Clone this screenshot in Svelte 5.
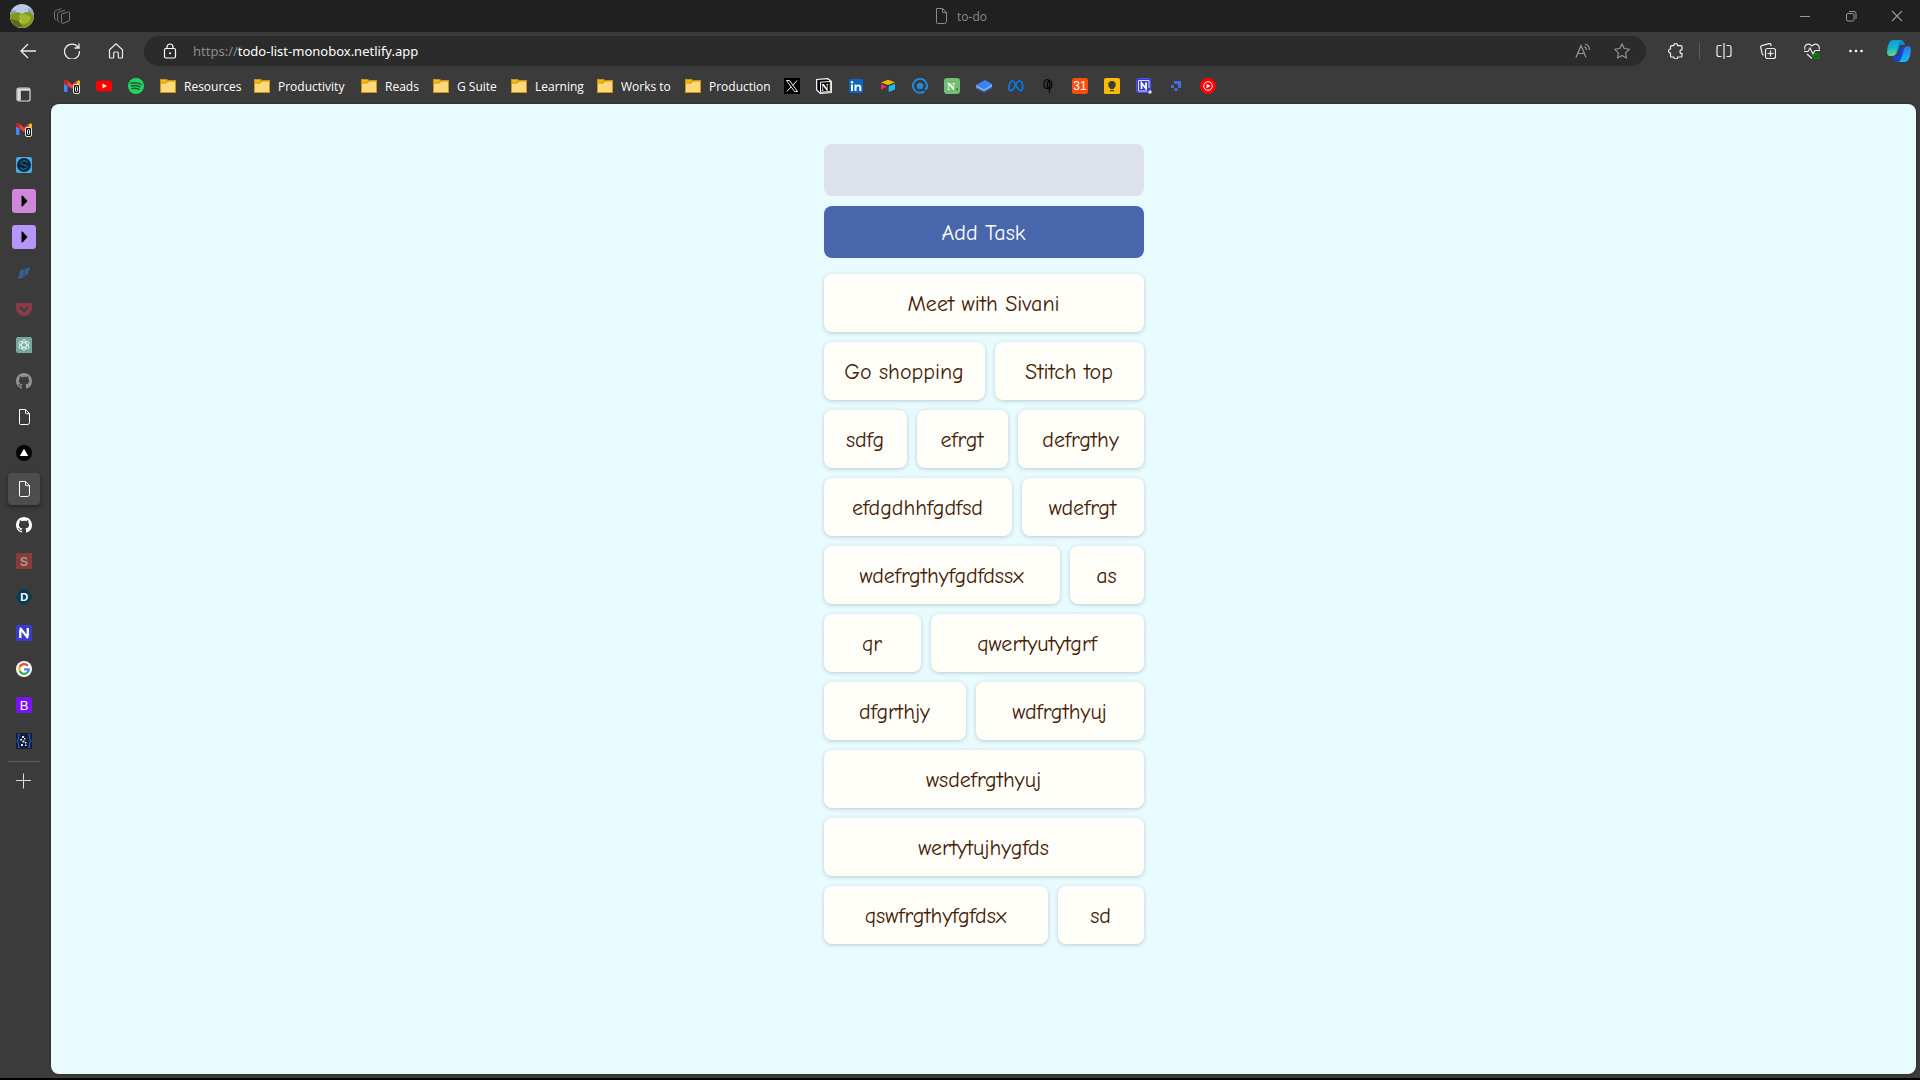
<script>
  const file = '<path d="M3.5.5h6l4 4v9q0 2-2 2h-7q-1 0-1-1zM9.500.5v3.500q0 .7.700.7h3.300" fill="none" stroke="currentColor"/>';
  const gmail = '<path fill="#4285f4" d="M0 3.500h3.500V14H1q-1 0-1-1z"/><path fill="#34a853" d="M12.500 6H16v7q0 1-1 1h-2.500z"/><path fill="#fbbc04" d="M12.500 4 14 2.500Q16 1.500 16 4v2l-3.500 2.500z"/><path fill="#ea4335" d="M0 5V3.500Q.5 1 3 2.500l5 4 5-4v5L8 11 3.500 7.600z"/><path fill="#c5221f" d="M0 4q0-2 2-2l1.500 1v5L0 5.500z"/><rect x="9.500" y="6.500" width="6" height="9" rx="1.500" fill="#111" stroke="#e8e8e8"/><rect x="11.500" y="8.500" width="2" height="5" rx="1" fill="none" stroke="#fff"/>';
  const github = '<path fill="currentColor" fill-rule="evenodd" d="M8 0C3.580 0 0 3.580 0 8c0 3.540 2.290 6.530 5.470 7.590.4.070.550-.170.550-.380 0-.190-.010-.820-.010-1.490-2.010.370-2.530-.490-2.690-.940-.090-.230-.480-.940-.820-1.130-.280-.150-.680-.520-.010-.530.630-.010 1.080.580 1.230.820.720 1.210 1.870.870 2.330.660.070-.520.280-.870.510-1.070-1.780-.200-3.640-.890-3.640-3.950 0-.870.310-1.590.820-2.150-.080-.200-.360-1.020.080-2.120 0 0 .670-.210 2.200.820A7.400 7.400 0 0 1 8 3.860c.680 0 1.360.090 2 .270 1.530-1.040 2.200-.820 2.200-.820.440 1.100.160 1.920.080 2.120.510.560.820 1.270.820 2.150 0 3.070-1.870 3.750-3.650 3.950.290.250.540.730.540 1.480 0 1.070-.010 1.930-.010 2.200 0 .210.150.460.550.380A8 8 0 0 0 16 8c0-4.420-3.580-8-8-8z"/>';
  const play = '<path d="M9.500 6.500h1l5 5.500-5 5.500h-1z" fill="#000"/>';

  const art = {
    file,
    gmail,
    github,
    workspaces: '<g fill="none" stroke="#777"><path d="m7.500 6 7-2.200q1-.3 1 .7v7.500q0 .8-.7 1.100l-6 2.300q-1.300.4-1.300-.9zM5 13.500q-1.300.3-1.300-1V5.500q0-1 .9-1.300L11 2.200M2.300 11.500Q.5 11.700.5 10.300V4q0-1 1-1.400L7.500.6"/></g>',
    back: '<path d="M16 8H1M8 1 1 8l7 7" fill="none" stroke="#eee" stroke-width="1.300"/>',
    refresh: '<path d="M14.300 4.500A7.500 7.500 0 1 0 15.500 8M15 .5V5h-4.500" fill="none" stroke="#eee" stroke-width="1.300"/>',
    home: '<path d="M1.500 6.800 8 .9l6.500 5.900v7.200q0 1-1 1H11q-.7 0-.7-.7V10q0-1-1-1H6.700q-1 0-1 1v4.300q0 .7-.7.700H2.500q-1 0-1-1z" fill="none" stroke="#eee" stroke-width="1.200"/>',
    lock: '<rect x="2.500" y="5.500" width="11" height="9.500" rx="1.500" fill="none" stroke="#fff" stroke-width="1.200"/><path d="M5 5.500V4a3 3 0 0 1 6 0v1.500" fill="none" stroke="#fff" stroke-width="1.200"/><circle cx="8" cy="10.300" r="1" fill="#fff"/>',
    read: '<path d="m1 14.500 5-12 5 12M3 10.500h6M9.500 3.500q2 1.500 2 3.500M10 1q4.500 1.500 4.500 6" fill="none" stroke="#999" stroke-width="1.200"/>',
    star: '<path d="m8 .8 2.200 4.700 5.200.7-3.800 3.600.9 5.200L8 12.500 3.500 15l.9-5.200L.6 6.200l5.200-.7z" fill="none" stroke="#999" stroke-width="1.100" stroke-linejoin="round"/>',
    puzzle: '<path d="M5.700 2.700a2 2 0 0 1 4 0h3.300q1 0 1 1v3a2 2 0 1 0 0 4v2.300q0 1-1 1H9.700a2 2 0 0 1-4 0H3.500q-1 0-1-1V10a2 2 0 0 1 0-4V3.700q0-1 1-1z" fill="none" stroke="#eee" stroke-width="1.200"/>',
    split: '<path d="M5.500 2.500H3q-2 0-2 2v7q0 2 2 2h2.500M10.500 2.500H13q2 0 2 2v7q0 2-2 2h-2.500M8 0v16" fill="none" stroke="#eee" stroke-width="1.200"/>',
    collections: '<rect x="5.500" y="5.500" width="10" height="10" rx="2" fill="none" stroke="#eee" stroke-width="1.200"/><path d="M10.500 7.500v6M7.500 10.500h6M3.500 12.500 2.300 11 .7 4.500Q.4 3 1.800 2.600L9 .7q1.500-.3 1.900 1L11.300 3" fill="none" stroke="#eee" stroke-width="1.200"/>',
    heart: '<path d="M1 6.500Q0 3.500 2.300 1.800 5.300 0 8 3q2.700-3 5.700-1.200Q16 3.500 15 6.500M0 8.500h4L6 5l3 6 2-3.500h5M3 11l5 4.500" fill="none" stroke="#eee" stroke-width="1.100"/><circle cx="12.500" cy="13" r="3.500" fill="#107c10"/><path d="m11 13 1.200 1.200 2-2.200" fill="none" stroke="#064a06"/>',
    dots: '<circle cx="2.500" cy="8" r="1.300" fill="#fff"/><circle cx="8" cy="8" r="1.300" fill="#fff"/><circle cx="13.500" cy="8" r="1.300" fill="#fff"/>',
    minimize: '<path d="M3 8.500h10" stroke="#999"/>',
    restore: '<rect x="3.500" y="5.500" width="7.500" height="7.500" rx="1.500" fill="none" stroke="#999"/><path d="M6 3.500h5q2 0 2 2V11" fill="none" stroke="#999"/>',
    close: '<path d="m3 3 10 10M13 3 3 13" stroke="#999" stroke-width="1.100"/>',
    folder: '<path d="M0 1h6.500l2 1H16v13H0z" fill="#c8951a"/><path d="M1 2h5L7 3 5.500 4.500H1z" fill="#ffb900"/><path d="M1 5.500h5L8 3.500h7V14H1z" fill="#ffd977"/>',
    youtube: '<rect y="2.500" width="16" height="11" rx="2.500" fill="red"/><path d="m6.500 5.500 4.500 2.500-4.500 2.500z" fill="#fff"/>',
    spotify: '<circle cx="8" cy="8" r="8" fill="#1ed760"/><path d="M3 5.300q5-1.500 10 1M3.500 8q4.500-1.200 8.500.9M4 10.600q3.700-1 7 .8" fill="none" stroke="#28503a" stroke-width="1.500" stroke-linecap="round"/>',
    x: '<path d="M0 0h16v16H0z"/><path d="M2.500 2.500h3l8 11h-3zM13 2.500 9 7.300M7 9l-4.200 4.500" fill="none" stroke="#eee"/>',
    notion: '<path d="m.7 1.500 11-.8 3.600 2.500v11.300l-11 .8L.7 12z" fill="#000" stroke="#fff" stroke-width="1.200"/><path d="m4.500 4.200 9.800-.7v10l-9.800.8z" fill="#000" stroke="#fff"/><text x="5.200" y="12.500" font-size="10" font-weight="700" font-family="Liberation Serif, serif" fill="#fff">N</text>',
    linkedin: '<rect x="1" y="1" width="14" height="14" rx="1" fill="#0a66c2"/><path d="M3 6.500h2V13H3zM6.500 6.500h2v1q2-2 4-.3.800.8.800 2.300V13h-2V9.800q0-1.600-1.300-1.600T8.500 9.800V13h-2z" fill="#fff"/><circle cx="4" cy="4.300" r="1.200" fill="#fff"/>',
    airtable: '<path d="m1 4.500 7-2.700 7 2.500-7 2.700z" fill="#fcb400"/><path d="m8.700 8.200 6.300-2.500v5.800l-6.300 2.500z" fill="#18bfff"/><path d="m1 6 5.800 2.700L1 11.500z" fill="#f82b60"/>',
    mail: '<circle cx="8" cy="8" r="3.200" fill="#2089dc"/><path d="M12.500 13.200A7 7 0 1 1 15 8v1q-.3 2-2 2" fill="none" stroke="#2089dc" stroke-width="2"/>',
    nGreen: '<rect width="16" height="16" rx="3" fill="#72bd70"/><text x="3" y="12" font-size="11" font-weight="700" font-family="Liberation Serif, serif" fill="#fff">N</text><circle cx="13" cy="11.300" r="1" fill="#38693a"/>',
    layers: '<path d="M0 7 9 2l7 4-8 5z" fill="#3983fa"/><path d="m0 7 8 4 8-5v3l-8 5-8-4z" fill="#87aee7"/><path d="m0 9 8 4 8-4.500v1.500l-8 4.500L0 10z" fill="#276cda"/>',
    meta: '<path d="M1 10q.5-7 3.500-7c3 0 4.500 9.700 8 9.700 3.500 0 2.500-9.700-1-9.700-4 0-5 9.700-8.500 9.700Q1 12.700 1 10z" fill="none" stroke="#087bf0" stroke-width="1.700"/>',
    loop: '<path d="M7 1.500C3 2.500 3 10.500 7 10.500s3.500-9 0-9M9.500 2.500c-3.500 2-2.500 9 0 8.500s3.500-8 0-8.500M9.500 5v10" fill="none" stroke="#050505" stroke-width="1.200"/>',
    calendar: '<rect width="16" height="16" rx="2.500" fill="#ff4b0b"/><text x="8" y="12.300" text-anchor="middle" font-size="12" font-family="Liberation Sans, sans-serif" fill="#fff">31</text>',
    keep: '<rect width="16" height="16" rx="1.500" fill="#fbbc04"/><circle cx="8" cy="6.700" r="3.700" fill="#3b3b3b"/><path d="M6 9h4v2H6zM6 12h4v1.200H6z" fill="#3b3b3b"/>',
    nBlue: '<rect x=".5" y=".5" width="14" height="14" rx="2" fill="#353bd5" stroke="#4a50e8"/><path d="M13 10V2.500H2.500V13H11" fill="none" stroke="#dfe0ff"/><path d="M5.500 11V5l4.500 5.500V4.500" fill="none" stroke="#fff" stroke-width="1.800"/><circle cx="14" cy="14" r="1.700" fill="#dfe0ff"/>',
    pixels: '<path d="M6 3h7v7h-3V6H6zM3 7h3v3H3zM6.500 10h3v3h-3z" fill="#456be6"/>',
    music: '<circle cx="8" cy="8" r="8" fill="red"/><circle cx="8" cy="8" r="4.300" fill="none" stroke="#fff"/><path d="m6.500 5.700 4 2.300-4 2.300z" fill="#fff"/>',
    tabs: '<rect x="1" y="1" width="13" height="13" rx="2" fill="none" stroke="#ddd" stroke-width="1.200"/><path d="M1.500 1.500h12v2.300h-12zM1.500 3h3.300v10.500H1.500z" fill="#ddd"/>',
    swirl: '<rect width="16" height="16" rx="2" fill="#41aee9"/><circle cx="8" cy="8" r="7" fill="#0b2436"/><path d="M12 5.500Q9 2 5.800 4.500T8 8t2 3.500-6-1" fill="none" stroke="#2377a5"/>',
    playPink: '<rect width="24" height="24" rx="3" fill="#cf87da"/>' + play,
    playViolet: '<rect width="24" height="24" rx="3" fill="#b796fc"/>' + play,
    ribbon: '<path d="M4 5.500 9 4 7 13l-5 1zM9.500 3.500 14 2l-2 7.500L8 11z" fill="#345f98"/>',
    pocket: '<path d="M0 3q0-1 1-1h14q1 0 1 1v4.500A8 7.500 0 0 1 0 7.500z" fill="#873c47"/><path d="m4 6 4 4 4-4" fill="none" stroke="#3b3b3b" stroke-width="1.800"/>',
    knot: '<path d="M2 0h12q2 0 2 2v14H2q-2 0-2-2V2q0-2 2-2z" fill="#75a99b"/><g fill="none" stroke="#e0eeea" stroke-width=".9"><ellipse cx="8" cy="8" rx="2.300" ry="5.500"/><ellipse cx="8" cy="8" rx="2.300" ry="5.500" transform="rotate(60 8 8)"/><ellipse cx="8" cy="8" rx="2.300" ry="5.500" transform="rotate(120 8 8)"/></g>',
    triangle: '<circle cx="8" cy="8" r="8"/><path d="m8 3.700 4.200 7.300H3.800z" fill="#fff"/>',
    s: '<path d="M0 0h16v16H0z" fill="#883c3a"/><text x="8" y="12.500" text-anchor="middle" font-size="12" font-weight="700" font-family="Liberation Sans, sans-serif" fill="#a19b9b">S</text>',
    d: '<path d="M4.500.5h7L16 8l-4.500 7.500h-7L0 8z" fill="#053c55"/><text x="8.200" y="12" text-anchor="middle" font-size="11" font-weight="700" font-family="Liberation Sans, sans-serif" fill="#fff">D</text>',
    n: '<rect width="16" height="16" rx="1.500" fill="#373bd2"/><path d="M4.300 13V5M4 3l8 10M11.800 11V3" fill="none" stroke="#fff" stroke-width="2.300"/>',
    google: '<circle cx="8" cy="8" r="8" fill="#fff"/><g fill="none" stroke-width="2.200"><path d="M11.800 4.800A4.800 4.800 0 0 0 3.700 6" stroke="#ea4335"/><path d="M3.700 6a4.800 4.800 0 0 0 0 4" stroke="#fbbc04"/><path d="M3.700 10a4.800 4.800 0 0 0 7.500 1.700" stroke="#34a853"/><path d="M11.200 11.700Q12.800 10.400 12.800 8.300H8" stroke="#4285f4"/></g>',
    b: '<rect width="16" height="16" rx="2" fill="#7b13f5"/><text x="8" y="12.600" text-anchor="middle" font-size="13" font-family="Liberation Sans, sans-serif" fill="#fff">B</text>',
    braces: '<path d="M0 0h16v16H0z" fill="#14202f"/><path d="M4 1.500H2.500V6L1 8l1.500 2v4.500H4M12 1.500h1.500V6L15 8l-1.500 2v4.500H12" fill="none" stroke="#2058dc" stroke-width="1.200"/><path d="M6 3h2v2H6zM8 5h1.500v1.500H8zM4 6h2v1.500H4zM6.500 7.500h2v2h-2zM9 9h1.500v1.500H9zM5 11h2v2H5zM9 11.500h1.500V13H9z" fill="#dbe4f4"/>',
    plus: '<path d="M7.500.5v15M0 7.500h15" stroke="#ddd"/>'
  };

  const quickLeft = [
    ['gmail', 'Gmail'], ['youtube', 'YouTube'], ['spotify', 'Spotify']
  ];
  const folders = [
    ['Resources', 94], ['Productivity', 107], ['Reads', 72], ['G Suite', 78],
    ['Learning', 86], ['Works to', 88], ['Production', 99]
  ];
  const quickRight = ['x', 'notion', 'linkedin', 'airtable', 'mail', 'nGreen', 'layers', 'meta', 'loop', 'calendar', 'keep', 'nBlue', 'pixels', 'music'];
  const sideTabs = [
    'swirl', 'playPink', 'playViolet', 'ribbon', 'pocket', 'knot', 'githubDim', 'file',
    'triangle', 'fileActive', 'github', 's', 'd', 'n', 'google', 'b', 'braces'
  ];

  // Every task carries the share of its row that it takes up.
  let rows = $state([
    [['Meet with Sivani', 320]],
    [['Go shopping', 161], ['Stitch top', 149]],
    [['sdfg', 83], ['efrgt', 91], ['defrgthy', 126]],
    [['efdgdhhfgdfsd', 188], ['wdefrgt', 122]],
    [['wdefrgthyfgdfdssx', 236], ['as', 74]],
    [['qr', 97], ['qwertyutytgrf', 213]],
    [['dfgrthjy', 142], ['wdfrgthyuj', 168]],
    [['wsdefrgthyuj', 320]],
    [['wertytujhygfds', 320]],
    [['qswfrgthyfgfdsx', 224], ['sd', 86]]
  ]);
  let draft = $state('');

  function addTask(event) {
    event.preventDefault();
    if (!draft.trim()) return;
    rows.push([[draft.trim(), 320]]);
    draft = '';
  }
</script>

{#snippet icon(name, size = 16, box = 16)}
  <svg width={size} height={size} viewBox="0 0 {box} {box}" aria-hidden="true">{@html art[name]}</svg>
{/snippet}

<div class="window">
  <header class="titlebar">
    <div class="title-left">
      <button class="avatar" aria-label="Profile">
        <svg width="24" height="24" viewBox="0 0 24 24" aria-hidden="true">
          <defs><clipPath id="round"><circle cx="12" cy="12" r="12" /></clipPath></defs>
          <g clip-path="url(#round)">
            <path fill="#b9c8e4" d="M0 0h24v24H0z" />
            <path fill="#92a4bd" d="M0 6h5l2 3-7 3zM18 4l6 3v6l-6-4z" />
            <path fill="#81961f" d="M0 11q7-5 12-1 6-5 12 2v12H0z" />
            <path fill="#a1b62d" d="M9 11q6-3 12 2l-3 6-8 2z" />
            <path fill="#566c18" d="m1 15 7 2 5 5-8 2z" />
            <path fill="#d5ddaf" d="M10 16h1v2h-1z" />
          </g>
        </svg>
      </button>
      <button aria-label="Workspaces">{@render icon('workspaces')}</button>
    </div>
    <div class="title">{@render icon('file')}<span>to-do</span></div>
    <div class="controls">
      <button aria-label="Minimize">{@render icon('minimize')}</button>
      <button aria-label="Restore">{@render icon('restore')}</button>
      <button aria-label="Close">{@render icon('close')}</button>
    </div>
  </header>

  <nav class="toolbar" aria-label="Browser">
    <button class="tool" aria-label="Back">{@render icon('back')}</button>
    <button class="tool" aria-label="Refresh">{@render icon('refresh')}</button>
    <button class="tool" aria-label="Home">{@render icon('home')}</button>
    <div class="address">
      <button aria-label="Site information">{@render icon('lock')}</button>
      <div class="url"><span>https://</span>todo-list-monobox.netlify.app</div>
      <button aria-label="Read aloud">{@render icon('read')}</button>
      <button aria-label="Add to favorites">{@render icon('star')}</button>
    </div>
    <button class="tool" aria-label="Extensions">{@render icon('puzzle')}</button>
    <i class="divider"></i>
    <button class="tool" aria-label="Split screen">{@render icon('split')}</button>
    <button class="tool" aria-label="Collections">{@render icon('collections')}</button>
    <button class="tool" aria-label="Browser essentials">{@render icon('heart')}</button>
    <button class="tool" aria-label="Settings and more">{@render icon('dots')}</button>
    <button class="tool copilot" aria-label="Copilot">
      <svg width="24" height="24" viewBox="0 0 24 24" aria-hidden="true">
        <defs>
          <linearGradient id="teal" x2=".2" y2="1"><stop stop-color="#0797e8" /><stop offset=".55" stop-color="#18b5cf" /><stop offset="1" stop-color="#65d481" /></linearGradient>
          <linearGradient id="sky" x2="0" y2="1"><stop stop-color="#2c75e3" /><stop offset="1" stop-color="#13bdf5" /></linearGradient>
        </defs>
        <path d="M13 1q4 0 5 5h-5l-3 9-4 2 4-14z" fill="#1488ca" />
        <path d="M11 23q-5 0-5-6h5l3-9h5l-4 13q-1 2-4 2z" fill="#1743cf" />
        <path d="M6 1h9q-3 1-4 6l-2 7q-1 3-4 3H3q-3 0-3-4Q1 1 6 1z" fill="url(#teal)" />
        <path d="M18 23h-7q3-1 4-6l2-7q1-3 4-3 3 0 3 4-1 12-6 12z" fill="url(#sky)" />
      </svg>
    </button>
  </nav>

  <div class="body">
    <aside class="sidebar" aria-label="Tabs">
      <button class="side short" aria-label="Tab actions">{@render icon('tabs')}</button>
      <button class="side short" aria-label="Gmail">{@render icon('gmail')}</button>
      {#each sideTabs as tab}
        {#if tab === 'fileActive'}
          <button class="side" aria-label="to-do"><span class="active">{@render icon('file')}</span></button>
        {:else if tab === 'githubDim'}
          <button class="side dim" aria-label="GitHub">{@render icon('github')}</button>
        {:else if tab.startsWith('play')}
          <button class="side" aria-label={tab}>{@render icon(tab, 24, 24)}</button>
        {:else}
          <button class="side" aria-label={tab}>{@render icon(tab)}</button>
        {/if}
      {/each}
      <hr />
      <button class="side" aria-label="New tab">{@render icon('plus')}</button>
    </aside>

    <div class="main">
      <nav class="bookmarks" aria-label="Favorites">
        {#each quickLeft as [name, label]}
          <a href="#{name}" aria-label={label}>{@render icon(name)}</a>
        {/each}
        {#each folders as [label, width]}
          <button class="folder" style:width="{width}px">{@render icon('folder')}<span>{label}</span></button>
        {/each}
        {#each quickRight as name}
          <a href="#{name}" aria-label={name}>{@render icon(name)}</a>
        {/each}
      </nav>

      <main class="page">
        <div class="todo">
          <form onsubmit={addTask}>
            <input type="text" aria-label="New task" bind:value={draft} />
            <button type="submit">Add Task</button>
          </form>
          <ul>
            {#each rows as row}
              <li class="row">
                {#each row as [label, share]}
                  <button class="task" style:flex-grow={share}>{label}</button>
                {/each}
              </li>
            {/each}
          </ul>
        </div>
      </main>
    </div>
  </div>
</div>

<style>
  :global(body) {
    margin: 0;
    background: #000;
  }
  * {
    box-sizing: border-box;
  }
  button {
    font: inherit;
    color: inherit;
    background: none;
    border: 0;
    padding: 0;
  }
  svg {
    display: block;
    flex: none;
  }
  .window {
    display: flex;
    flex-direction: column;
    min-height: 100vh;
    background: #3b3b3b;
    border-bottom: 2px solid #000;
    font-family: "Segoe UI", "Open Sans", sans-serif;
    font-size: 12px;
    color: #fff;
  }
  .titlebar {
    display: grid;
    grid-template-columns: 1fr auto 1fr;
    align-items: center;
    height: 32px;
    background: #202020;
    color: #8a8a8a;
  }
  .title-left {
    display: flex;
    align-items: center;
    gap: 20px;
    padding-left: 10px;
  }
  .title {
    display: flex;
    align-items: center;
    gap: 8px;
  }
  .controls {
    display: flex;
    justify-content: flex-end;
  }
  .controls button {
    display: grid;
    place-items: center;
    width: 46px;
    height: 32px;
  }
  .toolbar {
    display: flex;
    align-items: center;
    height: 36px;
    padding: 2px 0 0 6px;
  }
  .tool {
    display: grid;
    place-items: center;
    width: 44px;
    height: 32px;
  }
  .copilot {
    width: 42px;
  }
  .divider {
    width: 1px;
    height: 16px;
    margin: 0 2px 0 1px;
    background: #5c5c5c;
  }
  .address {
    display: flex;
    flex: 1;
    align-items: center;
    height: 30px;
    margin: 0 8px 0 6px;
    padding: 0 16px 0 18px;
    border-radius: 15px;
    background: #2b2b2b;
    font-family: "Segoe UI", "Noto Sans", sans-serif;
    font-size: 13px;
  }
  .url {
    flex: 1;
    padding-left: 15px;
  }
  .url span {
    color: #8c8c8c;
  }
  .address button + button {
    margin-left: 23px;
  }
  .body {
    display: flex;
    flex: 1;
  }
  .sidebar {
    display: flex;
    flex-direction: column;
    align-items: center;
    flex: none;
    width: 51px;
    padding: 10px 3px 0 0;
  }
  .side {
    display: grid;
    place-items: center;
    width: 40px;
    height: 36px;
  }
  .side.short {
    height: 34px;
  }
  .side.short + .side.short {
    margin-bottom: 1px;
  }
  .side.dim {
    color: #929292;
  }
  .active {
    display: grid;
    place-items: center;
    width: 32px;
    height: 32px;
    border-radius: 4px;
    background: #4d4d4d;
    box-shadow: 0 2px 4px #0006;
  }
  hr {
    width: 32px;
    height: 1px;
    margin: 2px 0 1px;
    border: 0;
    background: #606060;
  }
  .main {
    display: flex;
    flex: 1;
    flex-direction: column;
    padding: 0 4px 4px 0;
  }
  .bookmarks {
    display: flex;
    align-items: center;
    height: 36px;
    padding-left: 5px;
  }
  .bookmarks a,
  .folder {
    display: flex;
    align-items: center;
    gap: 8px;
    padding: 0 8px;
    white-space: nowrap;
  }
  .page {
    flex: 1;
    padding: 40px 20px;
    border-radius: 8px;
    background: #e8fcff;
    box-shadow: 0 0 2px #0008;
  }
  .todo {
    width: 100%;
    max-width: 320px;
    margin: 0 auto;
    font-family: "Comic Sans MS", "Comic Neue", "Open Sans", sans-serif;
    font-size: 22px;
    font-variant-ligatures: none;
    line-height: 28px;
    color: #432004;
  }
  form {
    display: flex;
    flex-direction: column;
    gap: 10px;
  }
  form input,
  form button {
    width: 100%;
    height: 52px;
    border: 0;
    border-radius: 8px;
    font: inherit;
  }
  form input {
    padding: 0 16px;
    background: #dde1ec;
    color: #432004;
    text-align: center;
  }
  form button {
    padding-top: 2px;
    background: #4866ac;
    color: #fff;
  }
  ul {
    display: flex;
    flex-direction: column;
    gap: 10px;
    margin: 16px 0 0;
    padding: 0;
    list-style: none;
  }
  .row {
    display: flex;
    gap: 10px;
  }
  .task {
    flex: 1 1 0;
    min-width: 0;
    padding: 16px 0 14px;
    border-radius: 8px;
    background: #fffef9;
    box-shadow: 0 1px 4px #0003;
    font-variant-ligatures: none;
    white-space: nowrap;
  }
</style>
